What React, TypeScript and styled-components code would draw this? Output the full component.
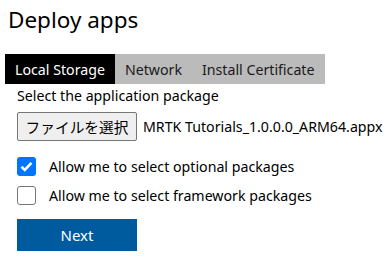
import React, { useState } from 'react';
import styled, { createGlobalStyle } from 'styled-components';

const GlobalStyle = createGlobalStyle`
  html, body {
    margin: 0;
    padding: 0;
    background: #ffffff;
  }
  body {
    font-family: "Noto Sans", "Noto Sans CJK JP", sans-serif;
    color: #000000;
  }
`;

const Page = styled.div`
  width: 392px;
  height: 276px;
  overflow: hidden;
  display: flex;
  flex-direction: column;
`;

const Title = styled.h1`
  margin: 4px 0 0 8px;
  height: 32px;
  font-size: 22.5px;
  line-height: 32px;
  font-weight: 400;
`;

const TabBar = styled.div`
  display: flex;
  margin: 18px 0 0 5px;
  height: 30px;
`;

const Tab = styled.div<{ $active?: boolean }>`
  display: flex;
  align-items: center;
  padding: 0 10px;
  font-size: 14.2px;
  background: ${p => (p.$active ? '#000000' : '#bbbbbb')};
  color: ${p => (p.$active ? '#ffffff' : '#1a1a1a')};
  white-space: nowrap;
`;

const Panel = styled.div`
  display: flex;
  flex-direction: column;
  padding-left: 17px;
`;

const Label = styled.div`
  margin-top: 2px;
  font-size: 14.2px;
  line-height: 20px;
`;

const FileRow = styled.div`
  display: flex;
  align-items: center;
  gap: 6px;
  margin-top: 6px;
  height: 29px;
`;

const FileButton = styled.button`
  box-sizing: border-box;
  width: 120px;
  height: 29px;
  padding: 0;
  border: 1px solid #767676;
  border-radius: 2px;
  background: #efefef;
  font-family: "Noto Sans CJK JP", sans-serif;
  font-size: 14.7px;
  color: #000000;
`;

const FileName = styled.span`
  font-size: 14.2px;
  white-space: nowrap;
`;

const CheckList = styled.div`
  display: flex;
  flex-direction: column;
  gap: 10px;
  margin-top: 16px;
`;

const CheckRow = styled.label`
  display: flex;
  align-items: center;
  gap: 13px;
  height: 19px;
  font-size: 14.2px;
`;

const Box = styled.span<{ $checked?: boolean }>`
  box-sizing: border-box;
  width: 19px;
  height: 19px;
  border-radius: 3px;
  display: flex;
  align-items: center;
  justify-content: center;
  background: ${p => (p.$checked ? '#0075ff' : '#ffffff')};
  border: ${p => (p.$checked ? 'none' : '1px solid #767676')};
`;

const NextButton = styled.button`
  margin-top: 14px;
  width: 120px;
  height: 32px;
  border: none;
  background: #005a9e;
  color: #ffffff;
  font-family: "Noto Sans", sans-serif;
  font-size: 15px;
  padding: 0;
`;

const Check = ({ checked, label }: { checked: boolean; label: string }) => (
  <CheckRow>
    <Box $checked={checked}>
      {checked && (
        <svg width="13" height="11" viewBox="0 0 13 11">
          <path d="M1.5 5.8 L4.8 9 L11.5 1.8" fill="none" stroke="#ffffff" strokeWidth="2.6" />
        </svg>
      )}
    </Box>
    {label}
  </CheckRow>
);

export default function App() {
  const [tab] = useState('local');
  return (
    <Page>
      <GlobalStyle />
      <Title>Deploy apps</Title>
      <TabBar>
        <Tab $active={tab === 'local'}>Local Storage</Tab>
        <Tab $active={tab === 'network'}>Network</Tab>
        <Tab $active={tab === 'cert'}>Install Certificate</Tab>
      </TabBar>
      <Panel>
        <Label>Select the application package</Label>
        <FileRow>
          <FileButton>ファイルを選択</FileButton>
          <FileName>MRTK Tutorials_1.0.0.0_ARM64.appx</FileName>
        </FileRow>
        <CheckList>
          <Check checked label="Allow me to select optional packages" />
          <Check checked={false} label="Allow me to select framework packages" />
        </CheckList>
        <NextButton>Next</NextButton>
      </Panel>
    </Page>
  );
}
